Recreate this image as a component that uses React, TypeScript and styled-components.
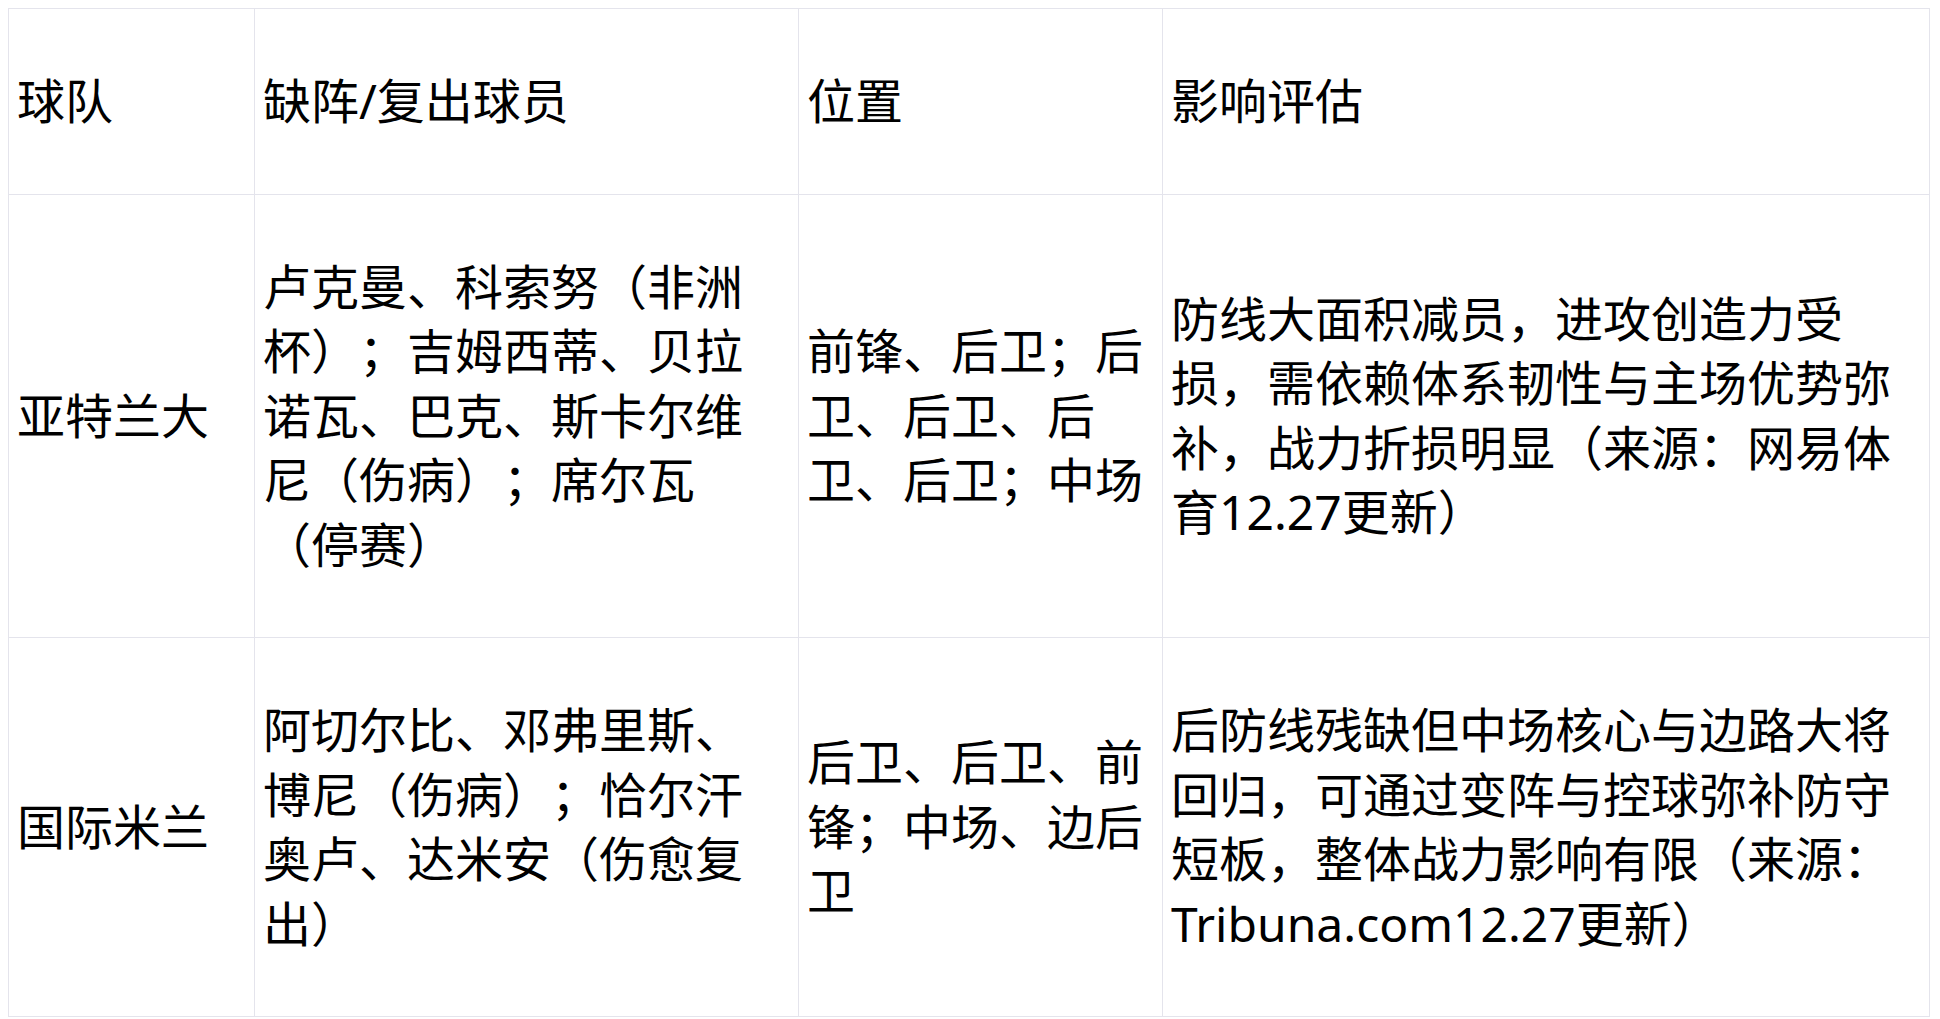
import React from "react";
import styled, { createGlobalStyle } from "styled-components";

const GlobalStyle = createGlobalStyle`
  html, body {
    margin: 0;
    padding: 0;
    background: #ffffff;
  }
  body {
    margin: 8px;
    font-family: "Noto Sans", "Noto Sans CJK SC", sans-serif;
    color: #000000;
  }
`;

const Table = styled.table`
  width: 1921px;
  border-collapse: collapse;
  table-layout: fixed;
  font-family: "Noto Sans", "Noto Sans CJK SC", sans-serif;
  font-size: 48px;
  line-height: 64.5px;
  color: #000000;
`;

const Col = styled.col<{ $w: number }>`
  width: ${(p) => p.$w}px;
`;

const Cell = styled.td`
  border: 1px solid #e4e4ec;
  padding: 60px 8px;
  vertical-align: middle;
  text-align: left;
  font-weight: 400;
  word-break: normal;
  line-break: strict;
  text-spacing-trim: space-all;
`;

const HeadCell = styled(Cell).attrs({ as: "th" })``;

type Row = { team: string; players: string; pos: string; impact: string };

const rows: Row[] = [
  {
    team: "亚特兰大",
    players: "卢克曼、科索努（非洲杯）；吉姆西蒂、贝拉诺瓦、巴克、斯卡尔维尼（伤病）；席尔瓦（停赛）",
    pos: "前锋、后卫；后卫、后卫、后卫、后卫；中场",
    impact: "防线大面积减员，进攻创造力受损，需依赖体系韧性与主场优势弥补，战力折损明显（来源：网易体育12.27更新）",
  },
  {
    team: "国际米兰",
    players: "阿切尔比、邓弗里斯、博尼（伤病）；恰尔汗奥卢、达米安（伤愈复出）",
    pos: "后卫、后卫、前锋；中场、边后卫",
    impact: "后防线残缺但中场核心与边路大将回归，可通过变阵与控球弥补防守短板，整体战力影响有限（来源：Tribuna.com12.27更新）",
  },
];

export default function App() {
  return (
    <>
      <GlobalStyle />
      <Table>
        <colgroup>
          <Col $w={246} />
          <Col $w={544} />
          <Col $w={364} />
          <Col $w={767} />
        </colgroup>
        <thead>
          <tr>
            <HeadCell>球队</HeadCell>
            <HeadCell>缺阵/复出球员</HeadCell>
            <HeadCell>位置</HeadCell>
            <HeadCell>影响评估</HeadCell>
          </tr>
        </thead>
        <tbody>
          {rows.map((r) => (
            <tr key={r.team}>
              <Cell>{r.team}</Cell>
              <Cell>{r.players}</Cell>
              <Cell>{r.pos}</Cell>
              <Cell>{r.impact}</Cell>
            </tr>
          ))}
        </tbody>
      </Table>
    </>
  );
}
